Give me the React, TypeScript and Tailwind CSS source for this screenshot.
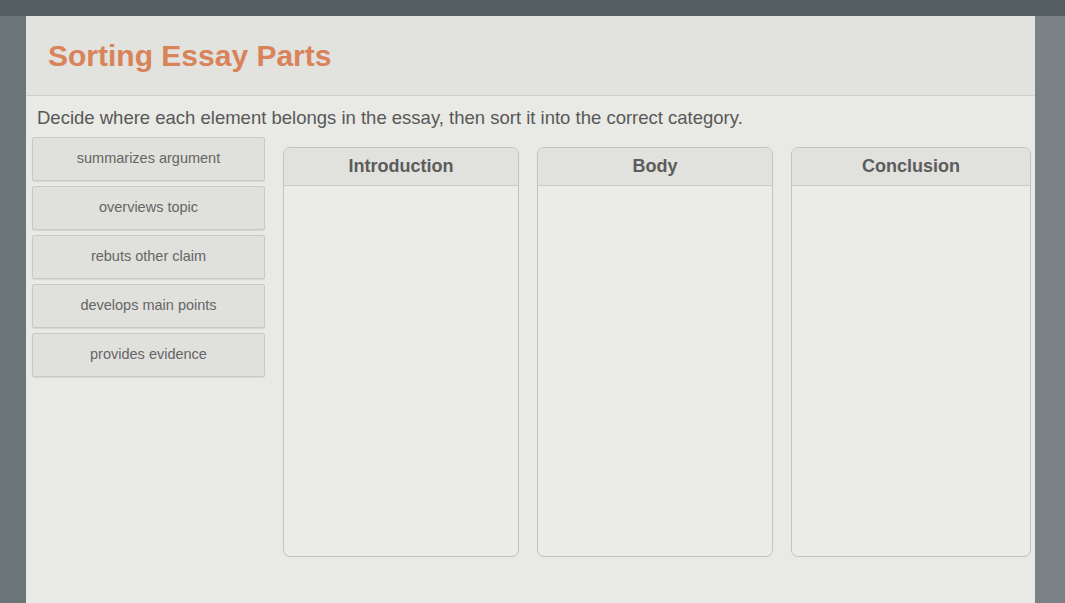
import React from "react";

const items = [
  "summarizes argument",
  "overviews topic",
  "rebuts other claim",
  "develops main points",
  "provides evidence",
];

const categories = [
  { name: "Introduction", w: "w-[236px]" },
  { name: "Body", w: "w-[236px]" },
  { name: "Conclusion", w: "w-[240px]" },
];

export default function App() {
  return (
    <div className="h-[603px] w-full flex flex-col bg-[#4f585b] font-['Liberation_Sans',Arial,sans-serif] overflow-hidden">
      <div className="h-[16px] bg-[#555e61] shrink-0" />
      <div className="flex flex-1 min-h-0">
        <div className="w-[26px] bg-[#6b7679] shrink-0" />
        <div className="flex-1 bg-[#e9e9e6] flex flex-col">
          <div className="h-[80px] bg-[#e2e2df] border-b border-[#cfcfcc] flex items-center pl-[22px] shrink-0">
            <h1 className="text-[30px] font-bold text-[#d8835a]">Sorting Essay Parts</h1>
          </div>
          <p className="pl-[11px] pt-[10px] text-[18.5px] text-[#585858] leading-[23px]">
            Decide where each element belongs in the essay, then sort it into the correct category.
          </p>
          <div className="flex gap-[18px] pl-[6px] pt-[8px]">
            <div className="w-[233px] flex flex-col gap-[5px] shrink-0">
              {items.map((t) => (
                <div
                  key={t}
                  className="h-[44px] flex items-center justify-center bg-[#e0e0dd] border border-[#c9c9c6] rounded-[2px] shadow-[0_1px_1px_rgba(0,0,0,0.08)] text-[14.5px] text-[#666666]"
                >
                  {t}
                </div>
              ))}
            </div>
            {categories.map((c) => (
              <div
                key={c.name}
                className={`${c.w} h-[410px] mt-[10px] flex flex-col border border-[#c2c2bf] rounded-[7px] overflow-hidden bg-[#ebebe8] shrink-0`}
              >
                <div className="h-[38px] flex items-center justify-center bg-[#e1e1de] border-b border-[#cacac7] text-[18px] font-bold text-[#5c5c5c]">
                  {c.name}
                </div>
                <div className="flex-1" />
              </div>
            ))}
          </div>
        </div>
        <div className="w-[30px] bg-[#7a8285] shrink-0" />
      </div>
    </div>
  );
}
